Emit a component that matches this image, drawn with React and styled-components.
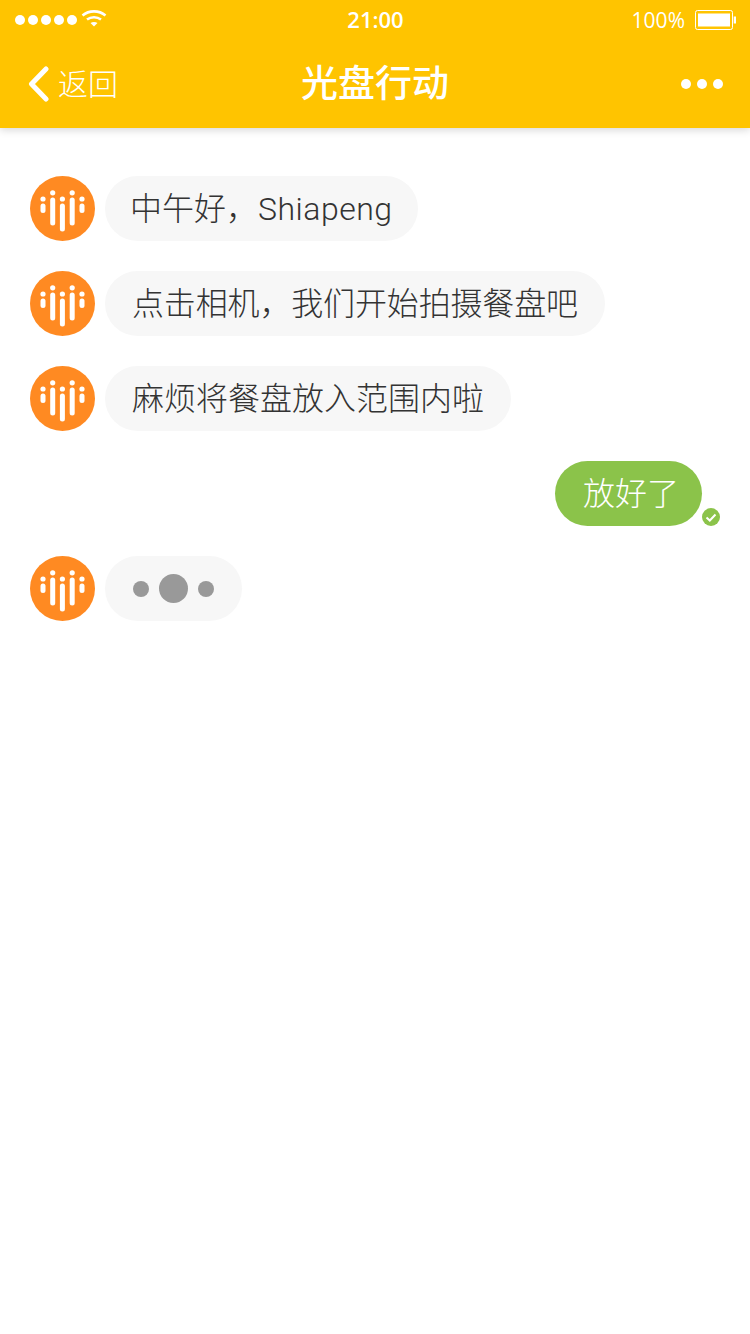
import React from 'react'
import styled, { createGlobalStyle } from 'styled-components'

const GlobalStyle = createGlobalStyle`
    html, body {
        margin: 0;
        padding: 0;
        background: #fff;
    }
    * {
        box-sizing: border-box;
    }
`
const Page = styled.div`
    width: 750px;
    height: 1334px;
    overflow: hidden;
    background: #fff;
    font-family: Roboto, "Noto Sans CJK SC", sans-serif;
`
const Header = styled.header`
    height: 128px;
    background: #ffc400;
    color: #fff;
    box-shadow: 0 2px 8px rgba(0, 0, 0, .16);
`
const StatusBar = styled.div`
    height: 40px;
    padding: 0 14px 0 15px;
    display: grid;
    grid-template-columns: 1fr auto 1fr;
    align-items: center;
`
const StatusLeft = styled.div`
    display: flex;
    align-items: center;
    gap: 3px;
`
const Signal = styled.span`
    width: 10px;
    height: 10px;
    border-radius: 50%;
    background: #fff;
`
const WifiIcon = styled.svg`
    margin: -4px 0 0 1px;
`
const Clock = styled.span`
    font-family: "Open Sans", sans-serif;
    font-size: 22px;
    font-weight: 600;
    line-height: 38px;
    padding-bottom: 2px;
`
const StatusRight = styled.div`
    display: flex;
    justify-content: flex-end;
    align-items: center;
    gap: 10px;
    font-family: "Open Sans", sans-serif;
    font-size: 21px;
`
const BatteryIcon = styled.svg`
    display: block;
`
const NavBar = styled.nav`
    height: 88px;
    padding: 0 27px;
    display: grid;
    grid-template-columns: 1fr auto 1fr;
    align-items: center;
`
const Back = styled.div`
    display: flex;
    align-items: center;
    gap: 7px;
    font-size: 30px;
    font-weight: 300;

    span {
        padding-bottom: 4px;
    }
`
const Title = styled.h1`
    margin: 0;
    font-size: 37px;
    font-weight: 500;
    line-height: 1;
`
const More = styled.div`
    display: flex;
    justify-content: flex-end;
    gap: 5.300px;
`
const MoreDot = styled.span`
    width: 10.500px;
    height: 10.500px;
    border-radius: 50%;
    background: #fff;
`
const Chat = styled.main`
    padding: 48px 30px 0;
    display: flex;
    flex-direction: column;
    gap: 30px;
`
const Row = styled.div`
    display: flex;
    align-items: flex-end;
    gap: 10px;
    justify-content: ${props => props.$mine ? 'flex-end' : 'flex-start'};
`
const AvatarIcon = styled.svg`
    display: block;
    flex: none;
`
const Bubble = styled.div`
    height: 65px;
    padding: 0 27px 6px;
    border-radius: 32.5px;
    display: flex;
    align-items: center;
    font-size: 32px;
    font-weight: 300;
    white-space: nowrap;
    letter-spacing: ${props => props.$tight ? '-0.15px' : '0'};
    background: #f7f7f7;
    color: #333;
`
const GreetBubble = styled(Bubble)`
    padding: 0 25px 6px 25px;
`
const Latin = styled.span`
    letter-spacing: .5px;
`
const MineBubble = styled(Bubble)`
    padding: 0 23px 6px 28px;
    background: #8bc34a;
    color: #fff;
`
const Sent = styled.svg`
    display: block;
    width: 18px;
    height: 18px;
    margin-left: -10px;
`
const Typing = styled(Bubble)`
    gap: 10px;
    padding: 0 28px;
`
const TypingDot = styled.span`
    width: ${props => props.$big ? 29 : 16}px;
    height: ${props => props.$big ? 29 : 16}px;
    border-radius: 50%;
    background: #999;
`

function Avatar() {
    return (
        <AvatarIcon width="65" height="65" viewBox="0 0 65 65">
            <circle cx="32.5" cy="32.5" r="32.5" fill="#ff8a22" />
            <g fill="#fff">
                <circle cx="13" cy="23" r="2.6" />
                <rect x="10.5" y="27.5" width="5" height="9.5" rx="2.5" />
                <circle cx="22.7" cy="16.8" r="2.6" />
                <rect x="20.2" y="21.5" width="5" height="28" rx="2.5" />
                <circle cx="32.4" cy="23" r="2.6" />
                <rect x="29.9" y="27.5" width="5" height="28" rx="2.5" />
                <circle cx="42.2" cy="16.8" r="2.6" />
                <rect x="39.7" y="21.5" width="5" height="28" rx="2.5" />
                <circle cx="52" cy="23" r="2.6" />
                <rect x="49.5" y="27.5" width="5" height="9.5" rx="2.5" />
            </g>
        </AvatarIcon>
    )
}

function Wifi() {
    return (
        <WifiIcon width="26" height="18" viewBox="0 0 26 18">
            <g fill="none" stroke="#fff" strokeWidth="2.6">
                <path d="M1.5 6.5C8 1 18 1 24.5 6.5" />
                <path d="M6 10.5C10 7.5 16 7.5 20 10.5" />
            </g>
            <path d="M9.5 14C11.5 12.5 14.5 12.5 16.5 14L13 17.5Z" fill="#fff" />
        </WifiIcon>
    )
}

function Battery() {
    return (
        <BatteryIcon width="41" height="20" viewBox="0 0 41 20">
            <rect x="0.5" y="0.5" width="37" height="19" rx="2" fill="none" stroke="#fff" />
            <rect x="3" y="3.500" width="32" height="13" fill="#fff" />
            <rect x="38.700" y="6.500" width="2.300" height="7" fill="#fff" />
        </BatteryIcon>
    )
}

export default function App() {
    return (
        <Page>
            <GlobalStyle />
            <Header>
                <StatusBar>
                    <StatusLeft>
                        {[0, 1, 2, 3, 4].map(i => <Signal key={i} />)}
                        <Wifi />
                    </StatusLeft>
                    <Clock>21:00</Clock>
                    <StatusRight>
                        <span>100%</span>
                        <Battery />
                    </StatusRight>
                </StatusBar>
                <NavBar>
                    <Back>
                        <svg width="24" height="36" viewBox="0 0 24 36">
                            <path d="M19 3L4.500 18L19 33" fill="none" stroke="#fff" strokeWidth="5" strokeLinecap="round" strokeLinejoin="round" />
                        </svg>
                        <span>返回</span>
                    </Back>
                    <Title>光盘行动</Title>
                    <More>
                        <MoreDot />
                        <MoreDot />
                        <MoreDot />
                    </More>
                </NavBar>
            </Header>
            <Chat>
                <Row>
                    <Avatar />
                    <GreetBubble><span>中午好，<Latin>Shiapeng</Latin></span></GreetBubble>
                </Row>
                <Row>
                    <Avatar />
                    <Bubble $tight>点击相机，我们开始拍摄餐盘吧</Bubble>
                </Row>
                <Row>
                    <Avatar />
                    <Bubble>麻烦将餐盘放入范围内啦</Bubble>
                </Row>
                <Row $mine>
                    <MineBubble>放好了</MineBubble>
                    <Sent viewBox="0 0 18 18">
                        <circle cx="9" cy="9" r="9" fill="#8bc34a" />
                        <path d="M4.500 9.500L7.800 12.500L13.500 6.500" fill="none" stroke="#fff" strokeWidth="2" />
                    </Sent>
                </Row>
                <Row>
                    <Avatar />
                    <Typing>
                        <TypingDot />
                        <TypingDot $big />
                        <TypingDot />
                    </Typing>
                </Row>
            </Chat>
        </Page>
    )
}
